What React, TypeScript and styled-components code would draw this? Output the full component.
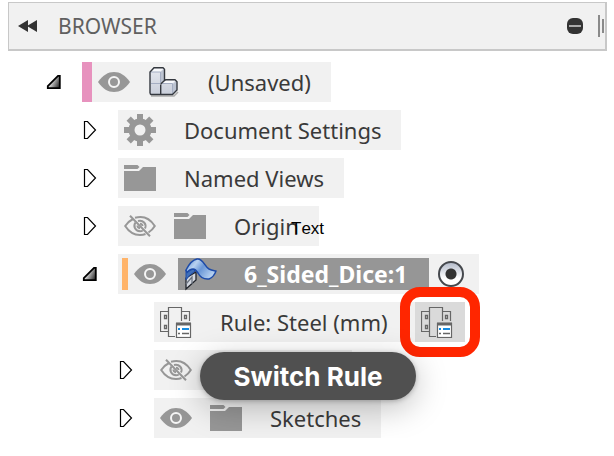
import React from 'react';
import styled, { createGlobalStyle } from 'styled-components';

const GlobalStyle = createGlobalStyle`
  *, *::before, *::after { box-sizing: border-box; }
  body {
    margin: 0;
    background: #fff;
    color: #3a3a3a;
    font-family: 'Noto Sans', 'Open Sans', sans-serif;
    font-size: 22px;
    line-height: 32px;
  }
  button { font: inherit; color: inherit; border: 0; padding: 0; background: none; }
  svg { display: block; flex: none; }
`;

const Panel = styled.main`
  padding: 2px 7px 0 8px;
`;

const Header = styled.header`
  display: flex;
  align-items: center;
  height: 49px;
  padding: 0 1px 0 8px;
  background: #f1f1f1;
  border: 1px solid #c8c8c8;
  border-width: 1px 2px 2px 1px;
`;

const HeaderButton = styled.button`
  display: flex;
`;

const Title = styled.h1`
  flex: 1;
  margin: 0 0 0 20px;
  color: #606060;
  font-size: 21px;
  font-weight: 400;
`;

const Grip = styled.div`
  display: flex;
  align-items: center;
  gap: 2px;
  margin-left: 15px;
`;

const GripBar = styled.span<{ $tall?: boolean }>`
  width: 2px;
  height: ${(p) => (p.$tall ? 22 : 14)}px;
  background: #8a8a8a;
`;

const Tree = styled.ul`
  display: flex;
  flex-direction: column;
  gap: 8px;
  margin: 11px 0 0 38px;
  padding: 0;
  list-style: none;
`;

const Item = styled.li<{ $depth: number }>`
  display: flex;
  align-items: center;
  padding-left: ${(p) => p.$depth * 36}px;
`;

const Toggle = styled.button`
  flex: none;
  width: 36px;
`;

const Indent = styled.span`
  flex: none;
  width: 36px;
`;

const Box = styled.div<{ $flush?: boolean }>`
  position: relative;
  display: flex;
  align-items: center;
  height: 40px;
  padding: 0 ${(p) => (p.$flush ? 0 : 20)}px 0 6px;
  background: #f1f1f1;
  white-space: nowrap;
`;

const RootBox = styled(Box)`
  padding-left: 0;
`;

const ActiveBox = styled(Box)`
  padding: 0 15px 0 4px;
`;

const RootMark = styled.span`
  width: 10px;
  height: 40px;
  margin-right: 6px;
  background: #e792be;
`;

const ActiveMark = styled.span`
  width: 6px;
  height: 32px;
  margin-right: 6px;
  background: #ffb46a;
`;

const EyeButton = styled.button<{ $tight?: boolean }>`
  display: flex;
  margin-right: ${(p) => (p.$tight ? 12 : 18)}px;
`;

const Label = styled.span`
  margin-left: 28px;
`;

const Selected = styled.div`
  display: flex;
  align-items: center;
  height: 32px;
  padding: 0 22px 0 6px;
  background: #969696;
  color: #fff;
  font-size: 23px;
  font-weight: 700;
`;

const SelectedLabel = styled(Label)`
  margin-left: 26px;
`;

const Activate = styled.input`
  appearance: none;
  width: 26px;
  height: 26px;
  margin: 0 0 0 9px;
  border: 2px solid #45484d;
  border-radius: 50%;
  background:
    radial-gradient(circle, #333 0 5px, transparent 6px),
    linear-gradient(#b5bccb, #fff 70%);
`;

const SwitchButton = styled.button`
  position: relative;
  display: flex;
  align-items: center;
  width: 50px;
  height: 40px;
  margin-left: 27px;
  padding-left: 6px;
  background: #dadada;
`;

const Highlight = styled.span`
  position: absolute;
  inset: -15px;
  border: 10px solid #ff2600;
  border-radius: 20px;
`;

const Tooltip = styled.div`
  position: absolute;
  z-index: 2;
  top: 50px;
  left: 46px;
  width: 216px;
  height: 48px;
  border-radius: 24px;
  background: #505050;
  box-shadow: 0 8px 32px rgba(0, 0, 0, 0.25), 0 1px 5px rgba(0, 0, 0, 0.25);
  color: #fff;
  font: 700 26px/50px Inter, 'Liberation Sans', sans-serif;
  text-align: center;
`;

const Note = styled.span`
  position: absolute;
  top: 13px;
  left: 173px;
  color: #000;
  font: 17px/20px 'Liberation Sans', Arial, sans-serif;
  font-kerning: none;
`;

const CoveredBox = styled(Box)`
  width: 198px;
`;

const Collapsed = () => (
  <Toggle aria-label="Expand">
    <svg width="16" height="20" viewBox="0 0 16 20">
      <path d="M2.500 1.500H5.500L13.500 10L5.500 18.500H2.500Z" fill="#fff" stroke="#000" strokeWidth="1.200" />
    </svg>
  </Toggle>
);

const Expanded = () => (
  <Toggle aria-label="Collapse">
    <svg width="16" height="16" viewBox="0 0 16 16">
      <defs>
        <linearGradient id="tri" x1="0" x2="1" y1="0.2" y2="0.7">
          <stop offset="0.2" stopColor="#fff" />
          <stop offset="1" stopColor="#333" />
        </linearGradient>
      </defs>
      <path d="M13.8 1.8V14.2H1.8V12L12 1.8Z" fill="url(#tri)" stroke="#000" strokeWidth="1.8" />
    </svg>
  </Toggle>
);

const Eye = ({ tight }: { tight?: boolean }) => (
  <EyeButton $tight={tight} aria-label="Hide">
    <svg width="32" height="20" viewBox="0 0 32 20">
      <path d="M0 10C5 3 10 0 16 0S27 3 32 10C27 17 22 20 16 20S5 17 0 10Z" fill="#979797" />
      <circle cx="16" cy="10" r="5" fill="#979797" stroke="#f5f5f5" strokeWidth="2" />
    </svg>
  </EyeButton>
);

const EyeOff = () => (
  <EyeButton aria-label="Show">
    <svg width="32" height="22" viewBox="0 0 32 22" fill="none" stroke="#979797" strokeWidth="2">
      <path d="M9 4C6 5.500 3.500 7.500 1.200 11C5 17 10 20 16 20C18 20 20 19.700 21.500 19" />
      <path d="M11 2.800C19 .5 26 3.500 30.800 11C29 14 27 16 24.500 17.500" />
      <path d="M11.500 7.500C9 11 11 16 16 16.200C17 16.200 18 16 18.800 15.500M14 6C19 4.500 23 9 21 13.500M13.500 10.500C13.500 12 14.500 13 16 13.200M16 8.700C17.500 8.700 18.500 10 18.500 11" />
      <path d="M6 .8L26 21.200" />
    </svg>
  </EyeButton>
);

const Folder = () => (
  <svg width="32" height="26" viewBox="0 0 32 26" fill="#979797">
    <path d="M0 0H13.500L15.500 2L13.500 4H0Z" />
    <path d="M0 6H15L19 2H32V26H0Z" />
  </svg>
);

const Gear = () => (
  <svg width="32" height="32" viewBox="0 0 32 32">
    <g fill="#979797">
      {[0, 45, 90, 135].map((a) => (
        <rect key={a} x="13" y="0" width="6" height="32" transform={`rotate(${a} 16 16)`} />
      ))}
      <circle cx="16" cy="16" r="11.500" />
    </g>
    <circle cx="16" cy="16" r="5.500" fill="#f1f1f1" />
  </svg>
);

const Blocks = () => (
  <svg width="32" height="32" viewBox="0 0 32 32">
    <defs>
      <linearGradient id="block" x1="0" x2="0" y1="0" y2="1">
        <stop offset="0" stopColor="#e6e9f0" />
        <stop offset="1" stopColor="#c9ceda" />
      </linearGradient>
    </defs>
    <path d="M3 30H26L30 26" fill="none" stroke="#aaa" strokeWidth="1.500" />
    <path d="M2 28.500V6L6 1.700H15L16.500 3.200V16L18 14H27L29 16V24L25 28.500H2Z" fill="url(#block)" />
    <path d="M3 6L6.500 2.500H15L12 6Z" fill="#f8f9fc" />
    <path d="M14 17.500L18 14H28L24.500 17.500Z" fill="#f8f9fc" />
    <path d="M12.500 6L16 3V15L13 18ZM25 18L28.500 15V24L25 28Z" fill="#bcc3d1" />
    <path d="M2.500 6H12.500V17M13 17.500H24.500V28M3 17.500H12" fill="none" stroke="#a5aec3" />
    <path d="M2 27.500V6L6 1.700H15L16.500 3.200V14.500L18 13.700H27L29 15.700V24L24.500 28.500H3L2 27.500M12.700 18.500V28M12.700 18L16.500 14.500" fill="none" stroke="#34383f" strokeWidth="1.400" />
  </svg>
);

const Surface = () => (
  <svg width="34" height="34" viewBox="0 0 34 34">
    <defs>
      <linearGradient id="surf" x1="0" x2="1" y1="0" y2="0.5">
        <stop offset="0" stopColor="#5b8cd0" />
        <stop offset="0.350" stopColor="#b9d2f0" />
        <stop offset="0.600" stopColor="#6a97d7" />
        <stop offset="1" stopColor="#b4cff0" />
      </linearGradient>
    </defs>
    <path d="M2 21L12 15V23L2 32Z" fill="#d3d7df" stroke="#20242b" strokeWidth="1.300" />
    <path d="M2 27L8 20V27" fill="none" stroke="#6c7480" strokeWidth="1.300" />
    <path d="M2 23V13L3 15L9 12L11 14L5 19Z" fill="#3f6fb9" stroke="#1c4aa8" strokeLinejoin="round" />
    <path d="M2 13C4 9 8 3 13 2C19 1 20 9 25 12C28 13.500 30 13.500 32 14C31 17 28 21 25 22C20 22.500 16 20 14 16C12.500 13.500 11 12 9 12C6.500 12 4.500 13.500 3 15.500Z" fill="url(#surf)" stroke="#1c4aa8" strokeWidth="1.500" strokeLinejoin="round" />
  </svg>
);

const RuleIcon = () => (
  <svg width="32" height="32" viewBox="0 0 32 32" fill="none" stroke="#666">
    <path d="M8.500 5.500H.5V25.500H8.500M21.500 5.500H29.500V15M8.500 1.500H21.500V15M8.500 1V30.500H15" strokeWidth="1.200" />
    <path d="M4.500 9.500H6.500V12.500H4.500ZM24.500 9.500H26.500V12.500H24.500ZM4.500 19.500H6.500V22.500H4.500Z" strokeWidth="1.300" />
    <rect x="16.500" y="17.500" width="14" height="14" fill="#fff" strokeWidth="1.200" />
    <path d="M16 18H31" strokeWidth="3" />
    <path d="M18 23H20M22 23H29" stroke="#168be0" strokeWidth="1.800" />
    <path d="M18 27.500H20M22 27.500H29" strokeWidth="1.500" />
  </svg>
);

export default function App() {
  return (
    <>
      <GlobalStyle />
      <Panel>
        <Header>
          <HeaderButton aria-label="Collapse panel">
            <svg width="21" height="12" viewBox="0 0 21 12" fill="#333">
              <path d="M11 0V12L1 6ZM20 0V12L10 6Z" />
            </svg>
          </HeaderButton>
          <Title>BROWSER</Title>
          <HeaderButton aria-label="Minimize">
            <svg width="16" height="16" viewBox="0 0 16 16">
              <rect width="16" height="16" rx="6" fill="#333" />
              <path d="M2 8H14" stroke="#aaa" strokeWidth="2" />
            </svg>
          </HeaderButton>
          <Grip>
            <GripBar $tall />
            <GripBar />
          </Grip>
        </Header>
        <Tree>
          <Item $depth={0}>
            <Expanded />
            <RootBox>
              <RootMark />
              <Eye />
              <Blocks />
              <Label>(Unsaved)</Label>
            </RootBox>
          </Item>
          <Item $depth={1}>
            <Collapsed />
            <Box>
              <Gear />
              <Label>Document Settings</Label>
            </Box>
          </Item>
          <Item $depth={1}>
            <Collapsed />
            <Box>
              <Folder />
              <Label>Named Views</Label>
            </Box>
          </Item>
          <Item $depth={1}>
            <Collapsed />
            <Box>
              <EyeOff />
              <Folder />
              <Label>Origin</Label>
              <Note>Text</Note>
            </Box>
          </Item>
          <Item $depth={1}>
            <Expanded />
            <ActiveBox>
              <ActiveMark />
              <Eye tight />
              <Selected>
                <Surface />
                <SelectedLabel>6_Sided_Dice:1</SelectedLabel>
              </Selected>
              <Activate type="radio" defaultChecked aria-label="Activate 6_Sided_Dice:1" />
            </ActiveBox>
          </Item>
          <Item $depth={2}>
            <Indent />
            <Box $flush>
              <RuleIcon />
              <Label>Rule: Steel (mm)</Label>
              <SwitchButton aria-label="Switch Rule">
                <RuleIcon />
                <Highlight />
              </SwitchButton>
              <Tooltip role="tooltip">Switch Rule</Tooltip>
            </Box>
          </Item>
          <Item $depth={2}>
            <Collapsed />
            <CoveredBox>
              <EyeOff />
            </CoveredBox>
          </Item>
          <Item $depth={2}>
            <Collapsed />
            <Box>
              <Eye />
              <Folder />
              <Label>Sketches</Label>
            </Box>
          </Item>
        </Tree>
      </Panel>
    </>
  );
}
